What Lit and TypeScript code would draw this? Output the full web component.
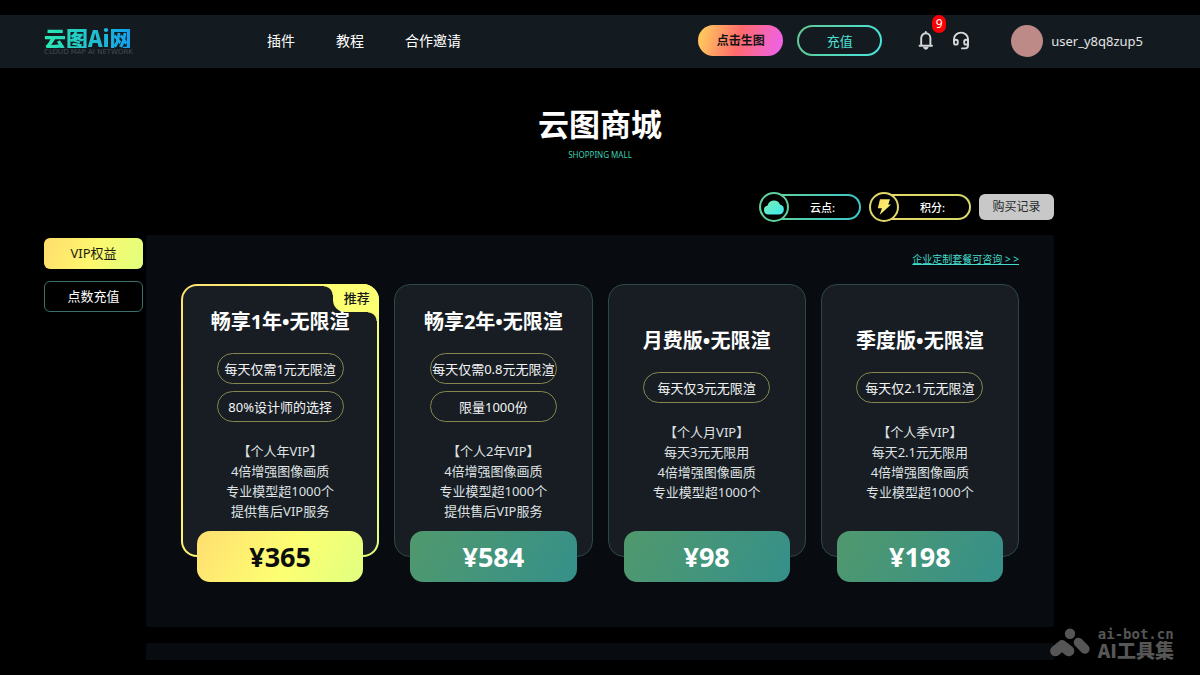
import { LitElement, html, css, nothing } from "lit";
import { customElement, property } from "lit/decorators.js";

interface Plan {
  title: string;
  tags: string[];
  lines: string[];
  price: string;
  featured?: boolean;
}

const PLANS: Plan[] = [
  {
    title: "畅享1年•无限渲",
    tags: ["每天仅需1元无限渲", "80%设计师的选择"],
    lines: ["【个人年VIP】", "4倍增强图像画质", "专业模型超1000个", "提供售后VIP服务"],
    price: "¥365",
    featured: true,
  },
  {
    title: "畅享2年•无限渲",
    tags: ["每天仅需0.8元无限渲", "限量1000份"],
    lines: ["【个人2年VIP】", "4倍增强图像画质", "专业模型超1000个", "提供售后VIP服务"],
    price: "¥584",
  },
  {
    title: "月费版•无限渲",
    tags: ["每天仅3元无限渲"],
    lines: ["【个人月VIP】", "每天3元无限用", "4倍增强图像画质", "专业模型超1000个"],
    price: "¥98",
  },
  {
    title: "季度版•无限渲",
    tags: ["每天仅2.1元无限渲"],
    lines: ["【个人季VIP】", "每天2.1元无限用", "4倍增强图像画质", "专业模型超1000个"],
    price: "¥198",
  },
];

@customElement("plan-card")
export class PlanCard extends LitElement {
  @property({ attribute: false }) plan!: Plan;

  static styles = css`
    :host {
      display: flex;
      min-width: 0;
    }
    .card {
      position: relative;
      flex: 1;
      min-width: 0;
      display: flex;
      flex-direction: column;
      box-sizing: border-box;
      margin-bottom: 25px;
      padding: 23px 15px 0;
      border: 1px solid #2e4748;
      border-radius: 16px;
      background: #171d23;
      text-align: center;
    }
    .featured {
      padding: 22px 14px 0;
      border: 2px solid transparent;
      background:
        linear-gradient(#171d23, #171d23) padding-box,
        linear-gradient(110deg, #ffe070, #fdff72 55%, #e2ff80) border-box;
    }
    .ribbon {
      position: absolute;
      top: -2px;
      right: -2px;
      box-sizing: border-box;
      width: 46px;
      height: 28px;
      padding-left: 1px;
      line-height: 28px;
      border-radius: 0 16px 0 12px;
      background: #fdff72;
      color: #15191c;
      font-size: 13px;
      font-weight: 500;
    }
    .ribbon::before,
    .ribbon::after {
      content: "";
      position: absolute;
      width: 9px;
      height: 9px;
      background: radial-gradient(circle at 0 100%, transparent 8px, #fdff72 9px);
    }
    .ribbon::before {
      top: 2px;
      right: 100%;
    }
    .ribbon::after {
      top: 100%;
      right: 2px;
    }
    .body {
      position: relative;
      flex: 1;
      display: flex;
      flex-direction: column;
      justify-content: center;
      align-items: center;
      margin-bottom: 10px;
    }
    h2 {
      margin: 0 0 17px;
      font-size: 20px;
      line-height: 28px;
      font-weight: 700;
      color: #fff;
      white-space: nowrap;
    }
    .tags {
      display: flex;
      flex-direction: column;
      gap: 7px;
      margin-bottom: 19px;
    }
    .tag {
      box-sizing: border-box;
      width: 127px;
      height: 31px;
      line-height: 30px;
      border: 1px solid #86864f;
      border-radius: 16px;
      font-size: 13px;
      color: #f4f5f5;
      white-space: nowrap;
      display: flex;
      justify-content: center;
    }
    .lines {
      margin: 0;
      padding: 0;
      list-style: none;
      font-size: 13px;
      line-height: 20px;
      color: #dfe1e2;
      white-space: nowrap;
    }
    .price {
      position: relative;
      box-sizing: border-box;
      height: 51px;
      margin: 0 0 -26px;
      padding: 0;
      border: 0;
      border-radius: 13px;
      background: linear-gradient(120deg, #51996d, #35908a);
      color: #fff;
      font: inherit;
      font-size: 27px;
      font-weight: 700;
      line-height: 50px;
      cursor: pointer;
    }
    .featured .price {
      margin-bottom: -27px;
      background: linear-gradient(120deg, #ffde70, #fdff72 55%, #e0ff80);
      color: #0b0d0e;
    }
  `;

  render() {
    const p = this.plan;
    return html`
      <article class="card ${p.featured ? "featured" : ""}">
        ${p.featured ? html`<span class="ribbon">推荐</span>` : nothing}
        <div class="body">
          <h2>${p.title}</h2>
          <div class="tags">${p.tags.map((t) => html`<span class="tag">${t}</span>`)}</div>
          <ul class="lines">
            ${p.lines.map((l) => html`<li>${l}</li>`)}
          </ul>
        </div>
        <button class="price" type="button">${p.price}</button>
      </article>
    `;
  }
}

@customElement("app-root")
export class AppRoot extends LitElement {
  static styles = css`
    :host {
      display: block;
      font-family: "Noto Sans", "Noto Sans CJK SC", sans-serif;
      color: #fff;
      background: #000;
    }
    .screen {
      position: relative;
      box-sizing: border-box;
      height: 100vh;
      padding: 15px 0;
      background: #000;
    }
    .page {
      height: 100%;
      overflow: hidden;
    }
    a {
      color: inherit;
      text-decoration: none;
    }
    button {
      padding: 0;
      border: 0;
      background: none;
      color: inherit;
      font: inherit;
      cursor: pointer;
      white-space: nowrap;
    }
    header {
      display: flex;
      align-items: center;
      box-sizing: border-box;
      height: 53px;
      padding: 0 57px 2px 44px;
      background: #141b20;
    }
    .logo {
      display: flex;
      flex-direction: column;
      width: 88px;
      margin-right: 135px;
      white-space: nowrap;
    }
    .logo-name {
      font-family: "Noto Sans CJK SC", sans-serif;
      font-size: 22px;
      line-height: 22px;
      font-weight: 900;
      background: linear-gradient(90deg, #2ce8b0, #22c4cc 50%, #14a0f0);
      background-clip: text;
      -webkit-background-clip: text;
      color: transparent;
    }
    .logo-sub {
      font-family: "DejaVu Sans", sans-serif;
      font-size: 7px;
      line-height: 8px;
      color: #424c50;
    }
    nav {
      display: flex;
      gap: 41px;
      font-size: 14px;
      line-height: 20px;
    }
    .actions {
      display: flex;
      align-items: center;
      margin-left: auto;
    }
    .btn-gen,
    .btn-pay {
      box-sizing: border-box;
      width: 85px;
      height: 31px;
      border-radius: 16px;
      font-size: 12px;
      line-height: 28px;
    }
    .btn-gen {
      margin-right: 14px;
      background: linear-gradient(105deg, #ffc45e 8%, #ff6a6c 48%, #f062e0 92%);
      color: #141414;
      font-weight: 700;
    }
    .btn-pay {
      margin-right: 36px;
      border: 2px solid transparent;
      background:
        linear-gradient(#141b20, #141b20) padding-box,
        linear-gradient(110deg, #62c890, #48e6e0) border-box;
      color: #4fe0d4;
      font-size: 13px;
    }
    .icon {
      position: relative;
      display: flex;
      margin-right: 18px;
    }
    .icon svg {
      display: block;
    }
    .badge {
      position: absolute;
      left: 14px;
      top: -16px;
      width: 14px;
      height: 18px;
      border-radius: 7px;
      background: #fb0005;
      font-size: 12px;
      line-height: 18px;
      text-align: center;
    }
    .user {
      display: flex;
      align-items: center;
      gap: 8px;
      margin-left: 23px;
      font-size: 13px;
      color: #e2e4e5;
    }
    .avatar {
      width: 32px;
      height: 32px;
      border-radius: 50%;
      background: #bd8a87;
    }
    .hero {
      padding-top: 35px;
      text-align: center;
    }
    h1 {
      margin: 0;
      font-size: 31px;
      line-height: 42px;
      font-weight: 700;
    }
    .hero p {
      margin: 5px 0 0;
      font-size: 8px;
      line-height: 10px;
      color: #3fcfae;
    }
    main {
      padding: 0 146px 0 44px;
    }
    .wallet {
      display: flex;
      justify-content: flex-end;
      align-items: center;
      gap: 8px;
      margin-top: 32px;
      height: 30px;
    }
    .pill {
      display: flex;
      align-items: center;
      width: 102px;
      font-size: 11px;
      font-weight: 500;
    }
    .disc {
      position: relative;
      display: grid;
      place-items: center;
      box-sizing: border-box;
      width: 30px;
      height: 30px;
      border: 2px solid #5fcf9e;
      border-radius: 50%;
      background: #000;
    }
    .slot {
      box-sizing: border-box;
      flex: 1;
      height: 26px;
      margin-left: -15px;
      padding-left: 10px;
      border: 2px solid transparent;
      border-radius: 0 13px 13px 0;
      background:
        linear-gradient(#000, #000) padding-box,
        linear-gradient(100deg, #62cf98, #3cc8cc) border-box;
      line-height: 24px;
      text-align: center;
    }
    .gold .disc {
      border-color: #e0d868;
    }
    .gold .slot {
      background:
        linear-gradient(#000, #000) padding-box,
        linear-gradient(100deg, #e6d466, #d6dc6c) border-box;
    }
    .records {
      width: 75px;
      height: 26px;
      border-radius: 6px;
      background: #c8c8c8;
      color: #26282a;
      font-size: 12px;
      line-height: 26px;
    }
    .columns {
      display: flex;
      gap: 3px;
      margin-top: 13px;
    }
    .tabs {
      display: flex;
      flex-direction: column;
      gap: 12px;
      width: 99px;
      padding-top: 3px;
    }
    .tab {
      box-sizing: border-box;
      height: 31px;
      border: 1px solid #3a6f6c;
      border-radius: 6px;
      font-size: 13px;
      line-height: 29px;
    }
    .tab.active {
      border: 0;
      background: linear-gradient(110deg, #ffdc6c, #fdf86e 50%, #e0ff7c);
      color: #1b1c14;
      line-height: 31px;
    }
    .panels {
      flex: 1;
      min-width: 0;
      display: flex;
      flex-direction: column;
      gap: 16px;
    }
    .panel {
      padding: 17px 35px 45px;
      border-radius: 4px;
      background: #080b10;
    }
    .custom {
      display: flex;
      justify-content: flex-end;
      margin-bottom: 17px;
      font-size: 10px;
      line-height: 15px;
      color: #45dccb;
    }
    .custom a {
      text-decoration: underline;
    }
    .plans {
      display: grid;
      grid-template-columns: repeat(4, minmax(0, 1fr));
      gap: 15px;
    }
    .mark {
      position: absolute;
      right: 26px;
      bottom: 16px;
      display: flex;
      align-items: center;
      gap: 7px;
      color: #565656;
      font-weight: 700;
    }
    .mark svg {
      flex: none;
    }
    .mark-text {
      display: flex;
      flex-direction: column;
    }
    .mark-url {
      font-family: "DejaVu Sans Mono", monospace;
      font-size: 14px;
      line-height: 14px;
    }
    .mark-name {
      font-family: "Noto Sans CJK SC", sans-serif;
      font-size: 19px;
      line-height: 18px;
      font-weight: 900;
    }
  `;

  render() {
    return html`
      <div class="screen">
        <div class="page">
          <header>
            <a class="logo" href="#">
              <span class="logo-name">云图Ai网</span>
              <span class="logo-sub">CLOUD MAP AI NETWORK</span>
            </a>
            <nav>
              <a href="#">插件</a>
              <a href="#">教程</a>
              <a href="#">合作邀请</a>
            </nav>
            <div class="actions">
              <button class="btn-gen" type="button">点击生图</button>
              <button class="btn-pay" type="button">充值</button>
              <button class="icon" type="button" aria-label="消息">
                <svg width="16" height="20" viewBox="0 0 16 20" fill="none" stroke="#d6d8d9" stroke-width="1.9" stroke-linecap="round" stroke-linejoin="round">
                  <path d="M3.2 14.4V7.2a4.6 4.9 0 0 1 9.2 0v7.2M1.6 14.8H14M7.8 1v1.2" />
                  <path d="M5.6 16.8a2.3 2 0 0 0 4.4 0z" fill="#d6d8d9" stroke-width="1" />
                </svg>
                <span class="badge">9</span>
              </button>
              <button class="icon" type="button" aria-label="客服">
                <svg width="18" height="20" viewBox="0 0 18 20" fill="none" stroke="#d6d8d9" stroke-width="1.9" stroke-linecap="round" stroke-linejoin="round">
                  <path d="M2 10V8a7 6.4 0 0 1 14 0v6.6a2.8 2.8 0 0 1-2.8 2.8H10" />
                  <rect x="2" y="8.8" width="3.8" height="4.8" rx="1.9" />
                  <rect x="12.2" y="8.8" width="3.8" height="4.8" rx="1.9" />
                </svg>
              </button>
              <a class="user" href="#">
                <span class="avatar"></span>
                <span>user_y8q8zup5</span>
              </a>
            </div>
          </header>

          <div class="hero">
            <h1>云图商城</h1>
            <p>SHOPPING MALL</p>
          </div>

          <main>
            <div class="wallet">
              <div class="pill">
                <span class="disc">
                  <svg width="22" height="18" viewBox="0 0 22 18">
                    <defs>
                      <linearGradient id="cloud" x1="0" y1="0" x2="1" y2="1">
                        <stop offset="0" stop-color="#7af0b0" />
                        <stop offset="1" stop-color="#3ce8f0" />
                      </linearGradient>
                    </defs>
                    <path fill="url(#cloud)" d="M5.6 16.6a4.6 4.6 0 0 1-1-9.1A6.5 6.5 0 0 1 17 6.6a5.1 5.1 0 0 1-.6 10z" />
                  </svg>
                </span>
                <span class="slot">云点:</span>
              </div>
              <div class="pill gold">
                <span class="disc">
                  <svg width="16" height="18" viewBox="0 0 16 18">
                    <defs>
                      <linearGradient id="bolt" x1="0" y1="0" x2="1" y2="1">
                        <stop offset="0" stop-color="#ffd860" />
                        <stop offset="1" stop-color="#f4ff78" />
                      </linearGradient>
                    </defs>
                    <path fill="url(#bolt)" d="M4 1.2h10L12.2 6.4h2.8L3.6 17l2.4-6.8H1.8z" />
                  </svg>
                </span>
                <span class="slot">积分:</span>
              </div>
              <button class="records" type="button">购买记录</button>
            </div>

            <div class="columns">
              <div class="tabs">
                <button class="tab active" type="button">VIP权益</button>
                <button class="tab" type="button">点数充值</button>
              </div>
              <div class="panels">
                <section class="panel">
                  <div class="custom"><a href="#">企业定制套餐可咨询 &gt; &gt;</a></div>
                  <div class="plans">
                    ${PLANS.map((p) => html`<plan-card .plan=${p}></plan-card>`)}
                  </div>
                </section>
                <section class="panel"></section>
              </div>
            </div>
          </main>
        </div>

        <div class="mark">
          <svg width="41" height="30" viewBox="0 0 41 30" fill="none" stroke="#565656" stroke-linecap="round" stroke-linejoin="round">
            <circle cx="20" cy="5.8" r="5.2" fill="#565656" stroke="none" />
            <path d="M5.4 23 L12 17.5 L19 23" stroke-width="10.6" />
            <path d="M28.5 14.5 L34.8 21" stroke-width="9.6" />
          </svg>
          <div class="mark-text">
            <span class="mark-url">ai-bot.cn</span>
            <span class="mark-name">AI工具集</span>
          </div>
        </div>
      </div>
    `;
  }
}
